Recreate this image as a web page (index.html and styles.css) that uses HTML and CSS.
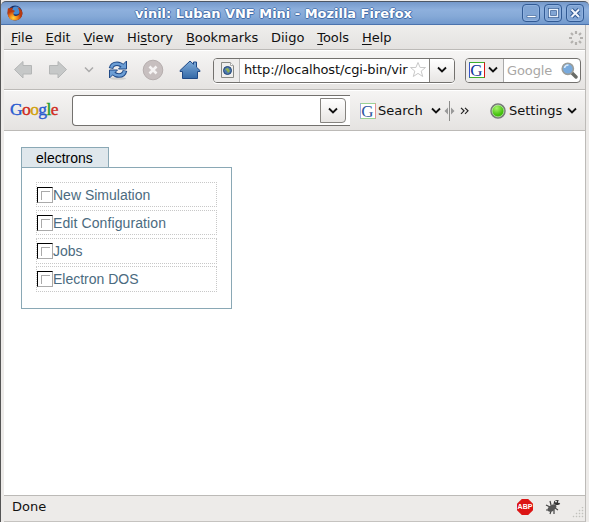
FILE: index.html
```
<!DOCTYPE html>
<html lang="en">
<head>
<meta charset="utf-8">
<title>vinil: Luban VNF Mini - Mozilla Firefox</title>
<link rel="stylesheet" href="styles.css">
</head>
<body>
<div class="window">
  <header class="titlebar">
    <svg class="fox" width="16" height="16" viewBox="0 0 16 16"><defs><radialGradient id="fx" cx=".4" cy=".8"><stop offset="0" stop-color="#ffd83c"/><stop offset=".55" stop-color="#f08018"/><stop offset="1" stop-color="#b83a10"/></radialGradient></defs><circle cx="8" cy="8" r="7.4" fill="#17306c"/><circle cx="9" cy="5.5" r="4" fill="#4a8bd0"/><path d="M1 3l1.500.8Q4 2.300 6 3L5 5q2 0 3 1L6.500 7.500Q6 11 9 11q3.500-.5 3.500-4Q12 4 10.500 2.300 15.500 4 15.500 9 14 15.500 8 15.500 1 15 .5 8.500.4 5 1 3z" fill="url(#fx)"/></svg>
    <h1 class="title">vinil: Luban VNF Mini - Mozilla Firefox</h1>
    <div class="controls">
      <span class="control"><svg width="16" height="16"><path d="M4 10.500h9v2H4z" fill="#fff" stroke="#315a94" stroke-width=".6"/></svg></span>
      <span class="control"><svg width="16" height="16"><path d="M4.500 4.500h8v7h-8z" fill="none" stroke="#315a94" stroke-width="3"/><path d="M4.500 4.500h8v7h-8z" fill="none" stroke="#e9f1fb" stroke-width="1.500"/></svg></span>
      <span class="control"><svg width="16" height="16"><path d="M4.500 4.500l7.500 7.500m0-7.500L4.500 12" stroke="#315a94" stroke-width="4"/><path d="M4.500 4.500l7.500 7.500m0-7.500L4.500 12" stroke="#f2f6fc" stroke-width="2"/></svg></span>
    </div>
  </header>
  <div class="frame">
    <nav class="menubar">
      <span><u>F</u>ile</span><span><u>E</u>dit</span><span><u>V</u>iew</span><span>Hi<u>s</u>tory</span><span><u>B</u>ookmarks</span><span>Diigo</span><span><u>T</u>ools</span><span><u>H</u>elp</span>
      <svg class="throbber" width="16" height="16" viewBox="-8 -8 16 16" stroke="#b3b1ae" stroke-width="2.200"><path d="M0-7v3M0 4v3M-7 0h3M4 0h3M-5-5l2 2M3 3l2 2M-5 5l2-2M3-3l2-2"/></svg>
    </nav>
    <div class="navbar">
      <svg class="back" width="20" height="20"><path d="M1.500 9.500l8.500-8v4h8.500v8.500H10v4z" fill="#c6c8c8" stroke="#b4b6b6"/></svg>
      <svg class="forward" width="20" height="20"><path d="M18.500 9.500l-8.500-8v4H1.500v8.500H10v4z" fill="#c6c8c8" stroke="#b4b6b6"/></svg>
      <svg class="recent" width="10" height="8"><path d="M1 1.500l4 4 4-4" fill="none" stroke="#aaa" stroke-width="1.500"/></svg>
      <svg class="reload" width="20" height="20" viewBox="0 0 20 20"><ellipse cx="10" cy="18.500" rx="8" ry="1.300" fill="#cfcfcd"/><g fill="none" stroke="#204a87" stroke-width="4.600"><path d="M3 8.500Q4 3.800 9 3.800q3.500 0 5.500 2.700"/><path d="M17 10.500q-1 5-6 5-3.500 0-5.500-2.700"/></g><path d="M18.500 1v8H10.500zM1.500 18v-8h8z" fill="#6c9ed5" stroke="#204a87"/><g fill="none" stroke="#6c9ed5" stroke-width="2.600"><path d="M3.200 7.800Q4.200 3.800 9 3.800q3.500 0 6.300 2.500"/><path d="M16.800 11.200q-1.200 4.300-5.800 4.300-3.500 0-6.300-2.500"/></g></svg>
      <svg class="stop" width="22" height="22"><circle cx="11" cy="11" r="9.800" fill="#c7bfbf" stroke="#b6aeae"/><path d="M7.500 7.500l7 7m0-7l-7 7" stroke="#f5f3f3" stroke-width="2.600"/></svg>
      <svg class="home" width="22" height="20" viewBox="0 0 22 20"><defs><linearGradient id="hm" x2="0" y2="1"><stop stop-color="#80acd9"/><stop offset="1" stop-color="#3469a7"/></linearGradient></defs><path d="M1 10.500L11 1l3.500 3.300V2h3v5.200l3.500 3.300v1h-2.500v7h-15v-7H1z" fill="url(#hm)" stroke="#204a87" stroke-linejoin="round"/></svg>
      <div class="address">
        <span class="site"><svg width="15" height="16"><path d="M1.500.5h9l3 3v12h-12z" fill="#efefee" stroke="#888a85"/><path d="M10.500.5v3h3" fill="#fff" stroke="#aaa"/><circle cx="7.500" cy="8.500" r="4" fill="#4d78ae" stroke="#234777"/><path d="M5 7l3-1 2 3-2 2-1-2z" fill="#93b34f"/></svg></span>
        <span class="url">http://localhost/cgi-bin/vir</span>
        <svg class="star" width="18" height="18"><path d="M9 1.500l2.100 5h5.400l-4.300 3.600 1.500 5.400L9 12.400l-4.700 3.100 1.500-5.400L1.500 6.500h5.400z" fill="#fff" stroke="#c9c9c9"/></svg>
        <span class="drop"><svg width="10" height="8"><path d="M1 1.500l4 4 4-4" fill="none" stroke="#111" stroke-width="1.800"/></svg></span>
      </div>
      <div class="search">
        <span class="engine"><span class="g">G</span><svg width="10" height="8"><path d="M1 1.500l4 4 4-4" fill="none" stroke="#111" stroke-width="1.800"/></svg></span>
        <span class="hint">Google</span>
        <svg class="lens" width="17" height="17"><path d="M10 10l5 5" stroke="#6a6c68" stroke-width="3.400" stroke-linecap="round"/><circle cx="6.800" cy="6.800" r="5.600" fill="#78aadd" stroke="#9b9d9a" stroke-width="1.600"/><path d="M3.500 6Q4 3 7.500 3" stroke="#d8eafb" stroke-width="1.500" fill="none"/></svg>
      </div>
    </div>
    <div class="googlebar">
      <span class="logo"><i class="b">G</i><i class="r">o</i><i class="y">o</i><i class="b">g</i><i class="n">l</i><i class="r">e</i></span>
      <div class="query"><span class="querydrop"><svg width="10" height="8"><path d="M1 1.500l4 4 4-4" fill="none" stroke="#111" stroke-width="1.800"/></svg></span></div>
      <span class="g soft">G</span><span class="searchlabel">Search</span>
      <svg class="sarrow" width="10" height="8"><path d="M1 1.500l4 4 4-4" fill="none" stroke="#111" stroke-width="1.800"/></svg>
      <svg class="grip" width="11" height="20"><path d="M5.500 0v20" stroke="#8c8c8a"/><path d="M4 6.500v7L.5 10zM7 6.500v7l3.500-3.500z" fill="#999"/></svg>
      <svg class="more" width="9" height="8"><path d="M1 .8l3 3-3 3M5 .8l3 3-3 3" fill="none" stroke="#222" stroke-width="1.200"/></svg>
      <svg class="led" width="16" height="16"><defs><radialGradient id="ld" cx=".4" cy=".3"><stop stop-color="#a6f56a"/><stop offset="1" stop-color="#42c00b"/></radialGradient></defs><circle cx="8" cy="8" r="7" fill="url(#ld)" stroke="#77777a" stroke-width="1.500"/><circle cx="8" cy="8" r="5.900" fill="none" stroke="#d0dccb" stroke-width=".7"/></svg>
      <span class="settings">Settings</span>
      <svg width="10" height="8"><path d="M1 1.500l4 4 4-4" fill="none" stroke="#111" stroke-width="1.800"/></svg>
    </div>
    <main class="page">
      <div class="tab">electrons</div>
      <section class="panel">
        <div class="item"><span class="box"></span><span>New Simulation</span></div>
        <div class="item"><span class="box"></span><span class="wide">Edit Configuration</span></div>
        <div class="item tall"><span class="box"></span><span>Jobs</span></div>
        <div class="item tall"><span class="box"></span><span>Electron DOS</span></div>
      </section>
    </main>
    <footer class="status">
      <span class="done">Done</span>
      <span class="abp">ABP</span>
      <svg class="bug" width="18" height="16"><g fill="none" stroke="#444" stroke-width="1.200"><path d="M5 2l1 4M1 6l4 2M1 11h4M5 15l1-3M9 15v-4M13 11l-3-2M10 2L9 5M12 4l3 1"/></g><ellipse cx="7" cy="9" rx="5" ry="3" transform="rotate(-35 7 9)" fill="#555"/><circle cx="12" cy="3.500" r="2.600" fill="#333"/><circle cx="11" cy="2.600" r=".9" fill="#fff"/><circle cx="14" cy="3" r="1" fill="#fff"/></svg>
      <svg class="resize" width="12" height="12" fill="#c3c1be"><path d="M10 0h1v1h-1zM7 3h1v1H7zM10 3h1v1h-1zM4 6h1v1H4zM7 6h1v1H7zM10 6h1v1h-1zM1 9h1v1H1zM4 9h1v1H4zM7 9h1v1H7zM10 9h1v1h-1z" stroke="#c3c1be" stroke-width=".4"/></svg>
    </footer>
  </div>
</div>
</body>
</html>
```
FILE: styles.css
```
* { box-sizing: border-box; }
body { margin: 0; font: 13px/16px "DejaVu Sans", sans-serif; color: #111; background: #a9a9a3; overflow: hidden; }
svg { display: block; flex: none; }
.window { width: 589px; height: 522px; padding-top: 1px; display: flex; flex-direction: column; background: #edebe9; border-left: 1px solid #555; }
.titlebar { height: 24px; flex: none; display: flex; align-items: center; padding: 0 5px 0 6px; background: linear-gradient(#7599cb, #8eb0dd 35%, #85a9d7 65%, #7299cd); border-top: 1px solid #4d5766; border-bottom: 1px solid #4b73ad; border-radius: 5px 5px 0 0; }
.fox { margin-top: -1px; }
.title { margin: 1px 0 0 112px; width: 278px; font: bold 13px/16px "DejaVu Sans", sans-serif; letter-spacing: -.02px; color: #fff; white-space: nowrap; text-shadow: 1px 0 #3f6ba8, -1px 0 #587fb6, 0 1px #3f6ba8, 0 -1px #587fb6; }
.controls { display: flex; gap: 4px; margin-left: auto; }
.control { width: 18px; height: 18px; border: 1px solid #315a94; border-radius: 4px; background: #81a5d4; box-shadow: inset 0 0 0 1px #8fb1df; }
.frame { flex: 1; display: flex; flex-direction: column; margin-left: 3px; margin-right: 3px; border-right: 1px solid #bdbbb8; }
.menubar { height: 25px; flex: none; display: flex; align-items: center; gap: 12.900px; padding: 0 1px 0 7px; background: linear-gradient(#efeeec, #e4e2e0); border-bottom: 1px solid #bcbab7; letter-spacing: -.04px; padding-top: 1px; }
.menubar u { text-underline-offset: 2px; text-decoration-thickness: 1px; }
.throbber { margin-left: auto; }
.navbar { height: 40px; flex: none; display: flex; align-items: center; background: linear-gradient(#f6f5f4, #e5e3e1); border-top: 1px solid #fff; border-bottom: 1px solid #bcbab7; }
.back { margin-left: 9px; }
.forward { margin-left: 15px; }
.recent { margin-left: 16px; }
.reload { margin-left: 14px; }
.stop { margin-left: 14px; }
.home { margin-left: 15px; }
.address { display: flex; align-items: center; margin-left: 12px; width: 242px; height: 25px; background: #fff; border: 1px solid #73716e; border-radius: 4px; overflow: hidden; box-shadow: 0 1px #fff; }
.site { width: 26px; height: 100%; flex: none; background: #eeedec; border-right: 1px solid #bbb; padding: 3px 0 0 6px; }
.url { width: 163px; margin-left: 4px; white-space: nowrap; flex: none; letter-spacing: -.14px; }
.star { margin-left: 2px; }
.drop { height: 100%; flex: 1; margin-left: 2px; display: flex; align-items: center; justify-content: center; border-left: 1px solid #85837f; background: linear-gradient(#fff, #e7e5e3); }
.search { display: flex; align-items: center; margin-left: 10px; width: 116px; height: 25px; background: #fff; border: 1px solid #73716e; border-radius: 4px; overflow: hidden; }
.engine { height: 100%; width: 38px; flex: none; display: flex; align-items: center; gap: 3px; padding-left: 3px; background: #eeedec; border-right: 1px solid #aaa; }
.g { width: 16px; height: 16px; flex: none; border: 1px solid; border-color: #3cae2b #d51414 #3cae2b #3454c9; background: #fff; color: #12349b; font: 17px/15px "Liberation Serif", serif; text-align: center; text-indent: -1px; }
.hint { margin-left: 3px; width: 46px; padding-top: 1px; letter-spacing: -.1px; color: #a9a7a5; }
.lens { margin-left: 8px; }
.googlebar { height: 41px; flex: none; display: flex; align-items: center; background: linear-gradient(#f5f4f3, #e5e3e1); border-top: 1px solid #fff; border-bottom: 1px solid #bcbab7; }
.logo { margin-left: 6px; width: 48px; margin-top: -3px; font: 17.500px/24px "Liberation Serif", serif; letter-spacing: -.6px; white-space: nowrap; }
.logo i { font-style: normal; -webkit-text-stroke: .4px; }
.b { color: #2a5bd0; } .r { color: #cf2b20; } .y { color: #d2a20c; } .n { color: #209a2c; }
.query { width: 278px; height: 31px; margin-left: 14px; border: 1px solid #73716e; border-right: 0; border-radius: 4px 0 0 4px; background: #fff; padding: 2px 4px 2px 0; display: flex; justify-content: flex-end; }
.querydrop { width: 26px; height: 25px; display: flex; align-items: center; justify-content: center; border: 1px solid #85837f; border-radius: 0 4px 4px 0; background: linear-gradient(#fff, #e7e5e3); }
.soft { margin-left: 10px; border-color: #9ad394 #e59494 #9ad394 #9dabe2; color: #31579f; }
.searchlabel { margin-left: 2px; width: 47px; }
.sarrow { margin-left: 6px; }
.grip { margin-left: 3px; }
.more { margin-left: 5px; }
.led { margin-left: 21px; }
.settings { margin: 0 4px 0 3px; width: 54px; }
.page { flex: 1; background: #fff; padding: 16px 0 0 17px; font-family: "Liberation Sans", sans-serif; font-size: 14px; }
.tab { width: 88px; height: 21px; margin-bottom: -1px; padding: 2px 0 0 14px; border: 1px solid #8aa8b5; background: #dfe7ec; color: #000; }
.panel { width: 211px; height: 142px; padding: 14px; border: 1px solid #8aa8b5; display: flex; flex-direction: column; gap: 3px; }
.item { width: 181px; height: 25px; display: flex; align-items: center; border: 1px dotted #c8c8c8; color: #4b6b80; white-space: nowrap; }
.tall { height: 26px; margin-bottom: -1px; }
.wide { letter-spacing: .1px; }
.box { width: 16px; height: 16px; flex: none; border: 1px solid #aaa; border-top-color: #000; border-left-color: #000; }
.box::after { content: ""; display: block; width: 8px; height: 8px; margin: 3px; border: solid #aaa; border-width: 1px 0 0 1px; }
.status { height: 27px; flex: none; display: flex; align-items: center; padding-left: 8px; background: #edebe9; border-top: 1px solid #bcbab7; border-bottom: 1px solid #c5c3c0; }
.done { margin-top: -4px; }
.abp { margin: -3px 0 0 auto; width: 16px; height: 16px; background: #dc1515; color: #fff; font: bold 7px/16px "Liberation Sans", sans-serif; text-align: center; clip-path: polygon(30% 0, 70% 0, 100% 30%, 100% 70%, 70% 100%, 30% 100%, 0 70%, 0 30%); }
.bug { margin: -3px 0 0 12px; }
.resize { margin: 9px 1px 0 9px; }
```
